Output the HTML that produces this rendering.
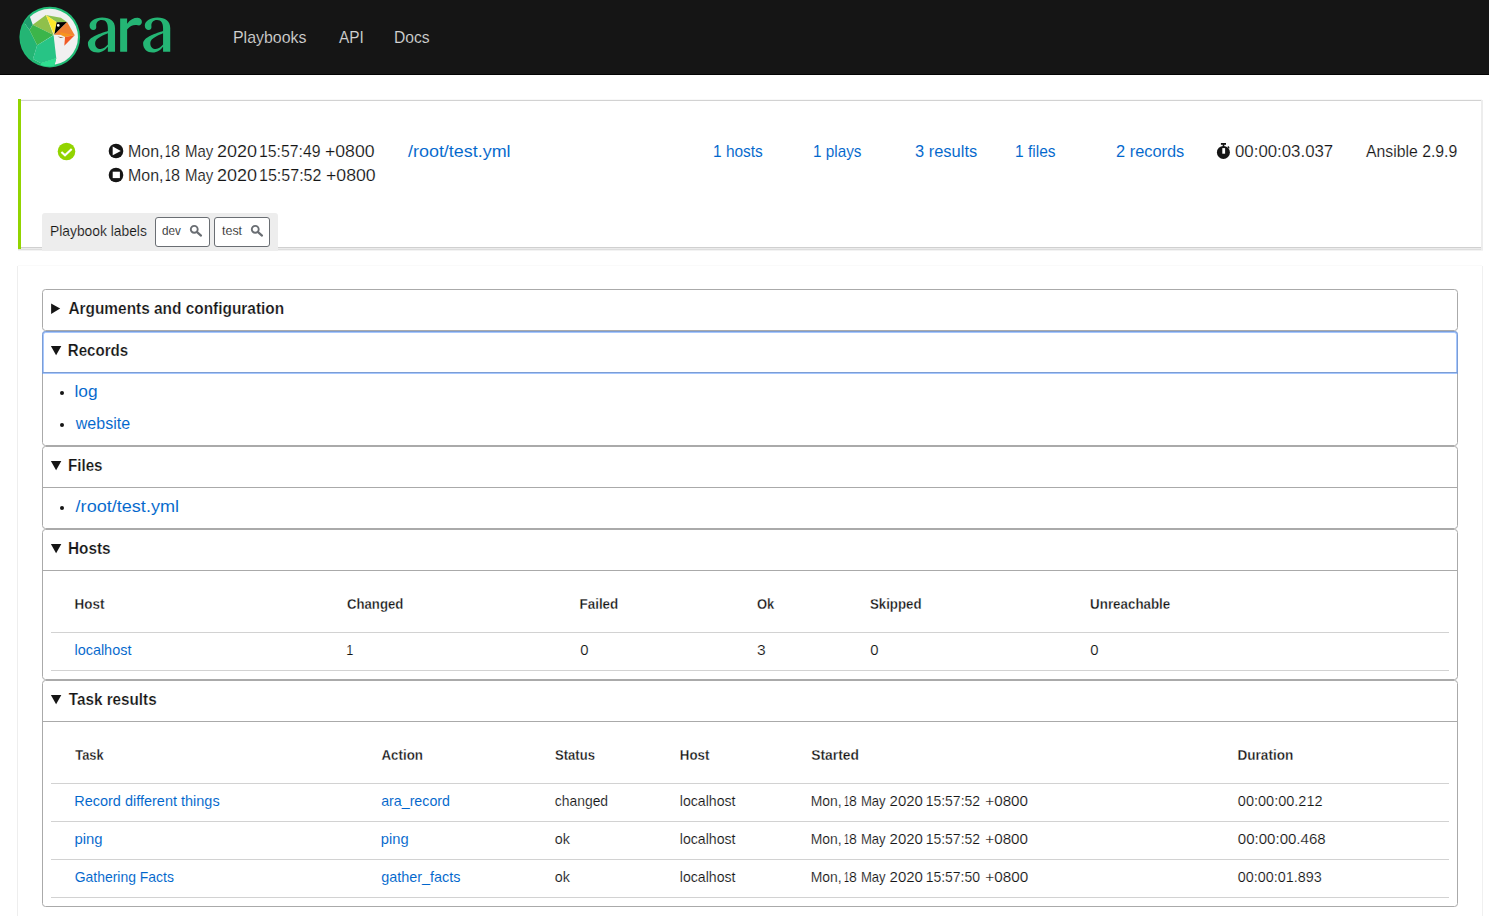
<!DOCTYPE html>
<html lang="en"><head><meta charset="utf-8"><title>ARA Records Ansible</title>
<style>
html,body{margin:0;padding:0}
body{width:1489px;height:916px;overflow:hidden;background:#fff;color:#151515;
 font-family:"Liberation Sans",sans-serif;font-size:16px;line-height:24px;position:relative}
a{color:#06c;text-decoration:none}
.t{display:inline-block;vertical-align:top;white-space:nowrap;transform-origin:0 50%}
.a{position:absolute;display:block;white-space:nowrap;transform-origin:0 50%;margin:0}
.a,td .t,li .t{-webkit-text-stroke:.15px #fff}
a.a,a .t{-webkit-text-stroke:.06px #fff}
summary .t{-webkit-text-stroke:.22px #fff}
th .t{-webkit-text-stroke:.3px #fff}
header a.a{-webkit-text-stroke:.12px #151515}
.a.lb{-webkit-text-stroke:.15px #ededed}
.ic{position:absolute;display:block;overflow:visible}
header{position:absolute;left:0;top:0;width:1489px;height:74px;background:#151515;border-bottom:1px solid #030303}
header .logo{position:absolute;left:15px;top:2px}
header .ara{position:absolute;left:82px;top:10px}
header nav a{color:#d2d2d2}
main{display:block}
.pb{position:absolute;left:0;top:0;width:1489px;height:260px}
.ln{position:absolute;display:block}
.labels{position:absolute;left:42px;top:213px;width:236px;height:38px;background:#ededed;border-radius:3px 3px 0 0}
.chip{position:absolute;top:4px;height:28px;color:#151515;border:1px solid #6a6e73;border-radius:3px;background:#fff}
.sec{position:absolute;left:0;top:0;width:1489px;height:916px}
.dl{position:absolute;left:42px;top:289px;width:1416px}
details{border:1px solid #aaa;border-radius:3.5px;padding:8px 8px 0;box-sizing:border-box;width:1416px;position:relative}
summary{font-weight:700;margin:-8px -8px 0;padding:8px;height:24px;list-style:none;display:block;position:relative;outline:none}
summary::-webkit-details-marker{display:none}
details[open]{padding:8px}
details[open]>summary{border-bottom:1px solid #aaa;margin-bottom:8px}
.tri{position:absolute;left:0;top:0}
summary .t{margin-left:0}
ul{margin:0;padding:0 0 0 24px;list-style:none}
li{height:24px;position:relative}
li+li{margin-top:8px}
li::before{content:"";position:absolute;left:-15.3px;top:9.6px;width:4.6px;height:4.6px;border-radius:50%;background:#151515}
table{border-collapse:collapse;table-layout:fixed;width:1398px;font-size:14px;line-height:21px}
th,td{text-align:left;padding:8px 0 8px 24px;border-bottom:1px solid #d2d2d2;font-weight:400;overflow:visible;white-space:nowrap}
th{padding-top:16px;padding-bottom:16px;font-weight:700}
.ring{position:absolute;left:-1px;top:-1px;width:1412px;height:39px;border:2px solid rgba(77,144,254,.5);border-radius:3.5px 3.5px 0 0;pointer-events:none}
</style></head><body>
<header>
<a href="#" class="brand"><svg class="logo" width="70" height="70" viewBox="0 0 916 916" aria-label="ara logo">
<defs><clipPath id="lc"><circle cx="455" cy="458.5" r="384"/></clipPath></defs>
<circle cx="455" cy="458.5" r="397" fill="#22bd77"/>
<circle cx="455" cy="458.5" r="369" fill="#f0f0f0"/>
<g clip-path="url(#lc)">
<polygon points="196,196 232,298 190,365 120,270 40,200 150,80" fill="#1f9e6e"/>
<polygon points="120,270 190,365 290,565 235,745 300,900 0,900 0,270" fill="#24b574"/>
<polygon points="232,298 405,170 505,432" fill="#8fc04b"/>
<polygon points="232,298 505,432 290,565 190,365" fill="#3cb54a"/>
<polygon points="405,170 600,205 680,262 545,265" fill="#8cc152"/>
<polygon points="405,170 545,265 512,430" fill="#fde92b"/>
<polygon points="545,265 682,262 514,428" fill="#000"/>
<circle cx="566" cy="306" r="17" fill="#fff"/>
<polygon points="682,262 782,436 514,428" fill="#f08232"/>
<polygon points="590,395 782,436 655,457 600,432" fill="#f7941e"/>
<polygon points="655,457 782,436 645,574" fill="#f15a24"/>
<polygon points="555,452 640,463 598,472" fill="#8b5e3c"/>
<polygon points="290,565 505,436 540,735 340,800 235,745" fill="#27c485"/>
<polygon points="235,745 340,800 540,735 515,830 500,900 260,900" fill="#24b574"/>
<polygon points="340,800 540,735 518,828 480,900 300,900 330,840" fill="#2edf90"/>
</g>
</svg><svg class="ara" width="100" height="50" viewBox="0 0 1489 744" aria-label="ara">
<g fill="#24b574" fill-rule="evenodd">
<path d="M492,622 L492,270 C492,170 420,113 300,113 C190,113 113,170 113,235 C113,275 138,298 170,298 C200,298 216,275 212,245 C205,190 240,150 295,150 C360,150 385,200 385,270 L385,312 C300,340 88,400 88,500 C88,585 150,634 230,634 C300,634 350,592 385,547 L385,622 Z M385,347 C330,372 195,420 195,490 C195,550 230,580 275,580 C320,580 360,545 385,515 Z"/>
<path d="M568,128 L672,128 L672,205 C715,140 780,113 832,116 C872,119 894,150 892,182 C889,218 860,235 830,227 C780,212 720,228 672,290 L672,622 L568,622 Z"/>
<path transform="translate(822,0)" d="M492,622 L492,270 C492,170 420,113 300,113 C190,113 113,170 113,235 C113,275 138,298 170,298 C200,298 216,275 212,245 C205,190 240,150 295,150 C360,150 385,200 385,270 L385,312 C300,340 88,400 88,500 C88,585 150,634 230,634 C300,634 350,592 385,547 L385,622 Z M385,347 C330,372 195,420 195,490 C195,550 230,580 275,580 C320,580 360,545 385,515 Z"/>
</g></svg></a>
<nav>
<a class="a" href="#" style="left:232.89px;top:26px;font-size:17px;line-height:24px;font-weight:400;transform:scaleX(0.9369)">Playbooks</a>
<a class="a" href="#" style="left:338.97px;top:26px;font-size:16px;line-height:24px;font-weight:400;transform:scaleX(0.9637)">API</a>
<a class="a" href="#" style="left:394.32px;top:26px;font-size:17px;line-height:24px;font-weight:400;transform:scaleX(0.9204)">Docs</a>
</nav></header>
<main>
<section class="pb"><i class="ln" style="left:21px;top:99px;width:1461px;height:1px;background:#f8f8f8"></i><i class="ln" style="left:21px;top:100px;width:1460px;height:1px;background:#d2d2d2"></i><i class="ln" style="left:1481px;top:100px;width:2px;height:150px;background:#ededed"></i><i class="ln" style="left:21px;top:247px;width:1460px;height:1px;background:#d0d0d0"></i><i class="ln" style="left:21px;top:248px;width:1460px;height:1px;background:#ebebeb"></i><i class="ln" style="left:18px;top:249px;width:1463px;height:1px;background:#dedede"></i><i class="ln" style="left:18px;top:250px;width:1465px;height:1px;background:#f3f3f3"></i><i class="ln" style="left:18px;top:99px;width:3px;height:150px;background:#92d400"></i>
<svg class="ic" style="left:57.1px;top:142.4px" width="19" height="19" viewBox="0 0 19 19"><circle cx="9.5" cy="9.5" r="8.8" fill="#92d400"/><path d="M4.4 9.9 L8 13.3 L14.7 6.9" fill="none" stroke="#fff" stroke-width="2.1"/></svg><svg class="ic" style="left:108px;top:143.25px" width="16" height="16" viewBox="0 0 16 16"><circle cx="8" cy="8" r="7.3" fill="#151515"/><path d="M4.7 3.5 L12.8 7.9 L4.7 12.3 Z" fill="#fff"/></svg><svg class="ic" style="left:108px;top:167.1px" width="16" height="16" viewBox="0 0 16 16"><circle cx="8" cy="8" r="7.3" fill="#151515"/><rect x="4.7" y="4.7" width="7.2" height="6.4" fill="#fff"/></svg>
<time><span class="a" style="left:127.74px;top:140px;font-size:17px;line-height:24px;font-weight:400;transform:scaleX(0.9392)">Mon, </span><span class="a" style="left:165.40px;top:140px;font-size:16px;line-height:24px;font-weight:400;transform:scaleX(0.6523)">1</span><span class="a" style="left:171.20px;top:140px;font-size:16px;line-height:24px;font-weight:400;transform:scaleX(1.0123)">8 </span><span class="a" style="left:184.57px;top:140px;font-size:17px;line-height:24px;font-weight:400;transform:scaleX(0.8831)">May </span><span class="a" style="left:217.20px;top:140px;font-size:16px;line-height:24px;font-weight:400;transform:scaleX(1.1240)">2020 </span><span class="a" style="left:259.10px;top:140px;font-size:16px;line-height:24px;font-weight:400;transform:scaleX(0.9867)">15:57:49 </span><span class="a" style="left:325.14px;top:140px;font-size:16px;line-height:24px;font-weight:400;transform:scaleX(1.1027)">+0800</span></time>
<time><span class="a" style="left:127.74px;top:164px;font-size:17px;line-height:24px;font-weight:400;transform:scaleX(0.9392)">Mon, </span><span class="a" style="left:165.40px;top:164px;font-size:16px;line-height:24px;font-weight:400;transform:scaleX(0.6523)">1</span><span class="a" style="left:171.20px;top:164px;font-size:16px;line-height:24px;font-weight:400;transform:scaleX(1.0123)">8 </span><span class="a" style="left:184.57px;top:164px;font-size:17px;line-height:24px;font-weight:400;transform:scaleX(0.8831)">May </span><span class="a" style="left:217.20px;top:164px;font-size:16px;line-height:24px;font-weight:400;transform:scaleX(1.1240)">2020 </span><span class="a" style="left:259.08px;top:164px;font-size:16px;line-height:24px;font-weight:400;transform:scaleX(1.0024)">15:57:52 </span><span class="a" style="left:325.94px;top:164px;font-size:16px;line-height:24px;font-weight:400;transform:scaleX(1.1038)">+0800</span></time>
<a class="a" href="#" style="left:408.40px;top:140px;font-size:17px;line-height:24px;font-weight:400;transform:scaleX(1.0544)">/root/test.yml</a>
<a class="a" href="#" style="left:713.02px;top:140px;font-size:17px;line-height:24px;font-weight:400;transform:scaleX(0.9092)">1 hosts</a>
<a class="a" href="#" style="left:813.23px;top:140px;font-size:17px;line-height:24px;font-weight:400;transform:scaleX(0.9008)">1 plays</a>
<a class="a" href="#" style="left:915.17px;top:140px;font-size:17px;line-height:24px;font-weight:400;transform:scaleX(0.9685)">3 results</a>
<a class="a" href="#" style="left:1014.62px;top:140px;font-size:17px;line-height:24px;font-weight:400;transform:scaleX(0.9129)">1 files</a>
<a class="a" href="#" style="left:1115.88px;top:140px;font-size:17px;line-height:24px;font-weight:400;transform:scaleX(0.9641)">2 records</a>
<svg class="ic" style="left:1216px;top:142px" width="16" height="18" viewBox="0 0 16 18"><circle cx="7.4" cy="10.4" r="6.5" fill="#151515"/><rect x="4.9" y="1" width="5.1" height="1.8" fill="#151515"/><rect x="6.7" y="2" width="1.6" height="3" fill="#151515"/><path d="M11.5 4.6 L12.9 4.2 L13.6 6.2 L12.4 6.6Z" fill="#151515"/><rect x="6.3" y="6.1" width="2.8" height="5.6" fill="#fff"/></svg>
<span class="a" style="left:1234.74px;top:140px;font-size:16px;line-height:24px;font-weight:400;transform:scaleX(1.0512)">00:00:03.037</span>
<span class="a" style="left:1365.67px;top:140px;font-size:17px;line-height:24px;font-weight:400;transform:scaleX(0.9287)">Ansible 2.9.9</span>
<div class="labels">
<span class="a lb" style="left:7.67px;top:7px;font-size:15px;line-height:21px;font-weight:400;transform:scaleX(0.9216)">Playbook labels</span>
<a href="#" class="chip" style="left:113px;width:53px"><span class="a" style="left:6.41px;top:3px;font-size:13px;line-height:20px;font-weight:400;transform:scaleX(0.8984)">dev</span><svg class="ic" style="left:33px;top:6px" width="15" height="14" viewBox="0 0 15 14"><circle cx="5.25" cy="5.3" r="3.45" fill="none" stroke="#6a6e73" stroke-width="1.9"/><path d="M7.8 7.9 L12 11.6" stroke="#6a6e73" stroke-width="2.2" stroke-linecap="round"/></svg></a>
<a href="#" class="chip" style="left:172px;width:54px"><span class="a" style="left:6.81px;top:3px;font-size:13px;line-height:20px;font-weight:400;transform:scaleX(0.9583)">test</span><svg class="ic" style="left:34.6px;top:6px" width="15" height="14" viewBox="0 0 15 14"><circle cx="5.25" cy="5.3" r="3.45" fill="none" stroke="#6a6e73" stroke-width="1.9"/><path d="M7.8 7.9 L12 11.6" stroke="#6a6e73" stroke-width="2.2" stroke-linecap="round"/></svg></a>
</div>
</section>
<section class="sec"><i class="ln" style="left:18px;top:265px;width:1464px;height:1px;background:#fafafa"></i><i class="ln" style="left:17px;top:266px;width:1px;height:650px;background:#eeeeee"></i><i class="ln" style="left:1482px;top:266px;width:1px;height:650px;background:#f0f0f0"></i></section>
<div class="dl">
<details><summary><svg class="tri" width="30" height="40" viewBox="0 0 30 40"><path d="M8.1 13.4 L17.2 18.6 L8.1 23.9 Z" fill="#151515"/></svg><span class="t" style="font-size:17px;transform:translate(17.42px,-1px) scaleX(0.9065)">Arguments and configuration</span></summary></details>
<details open><summary><svg class="tri" width="30" height="40" viewBox="0 0 30 40"><path d="M7.9 14 L18.3 14 L13.1 23.3 Z" fill="#151515"/></svg><span class="t" style="font-size:17px;transform:translate(16.79px,-1px) scaleX(0.8883)">Records</span><span class="ring"></span></summary>
<ul><li><a href="#"><span class="t" style="font-size:17px;transform:translate(-0.47px,-1px) scaleX(1.0174)">log</span></a></li>
<li><a href="#"><span class="t" style="font-size:17px;transform:translate(0.72px,-1px) scaleX(0.9436)">website</span></a></li></ul></details>
<details open><summary><svg class="tri" width="30" height="40" viewBox="0 0 30 40"><path d="M7.9 14 L18.3 14 L13.1 23.3 Z" fill="#151515"/></svg><span class="t" style="font-size:17px;transform:translate(16.99px,-1px) scaleX(0.8915)">Files</span></summary>
<ul><li><a href="#"><span class="t" style="font-size:17px;transform:translate(0.60px,-1px) scaleX(1.0628)">/root/test.yml</span></a></li></ul></details>
<details open><summary><svg class="tri" width="30" height="40" viewBox="0 0 30 40"><path d="M7.9 14 L18.3 14 L13.1 23.3 Z" fill="#151515"/></svg><span class="t" style="font-size:17px;transform:translate(16.97px,-1px) scaleX(0.9031)">Hosts</span></summary>
<table><colgroup><col style="width:272px"><col style="width:233px"><col style="width:177px"><col style="width:113px"><col style="width:220px"><col style="width:383px"></colgroup>
<thead><tr><th><span class="t" style="font-size:15px;transform:translate(-0.50px,-2px) scaleX(0.8959)">Host</span></th><th><span class="t" style="font-size:15px;transform:translate(-0.04px,-2px) scaleX(0.8791)">Changed</span></th><th><span class="t" style="font-size:15px;transform:translate(-0.50px,-2px) scaleX(0.8947)">Failed</span></th><th><span class="t" style="transform:translate(-0.03px,-1px) scaleX(0.9274)">Ok</span></th><th><span class="t" style="font-size:15px;transform:translate(-0.08px,-2px) scaleX(0.8854)">Skipped</span></th><th><span class="t" style="font-size:15px;transform:translate(0.10px,-2px) scaleX(0.8903)">Unreachable</span></th></tr></thead>
<tbody><tr><td><a href="#"><span class="t" style="font-size:15px;transform:translate(-0.57px,-2px) scaleX(0.9624)">localhost</span></a></td><td><span class="t" style="transform:translate(-0.67px,-1px) scaleX(0.9112)">1</span></td><td><span class="t" style="transform:translate(0.32px,-1px) scaleX(1.0609)">0</span></td><td><span class="t" style="transform:translate(0.01px,-1px) scaleX(1.1148)">3</span></td><td><span class="t" style="transform:translate(0.32px,-1px) scaleX(1.0609)">0</span></td><td><span class="t" style="transform:translate(0.32px,-1px) scaleX(1.0609)">0</span></td></tr></tbody></table></details>
<details open><summary><svg class="tri" width="30" height="40" viewBox="0 0 30 40"><path d="M7.9 14 L18.3 14 L13.1 23.3 Z" fill="#151515"/></svg><span class="t" style="font-size:17px;transform:translate(17.83px,-1px) scaleX(0.8963)">Task results</span></summary>
<table><colgroup><col style="width:306px"><col style="width:174px"><col style="width:125px"><col style="width:131px"><col style="width:427px"><col style="width:235px"></colgroup>
<thead><tr><th><span class="t" style="font-size:15px;transform:translate(0.26px,-2px) scaleX(0.8566)">Task</span></th><th><span class="t" style="font-size:15px;transform:translate(0.47px,-2px) scaleX(0.8885)">Action</span></th><th><span class="t" style="font-size:15px;transform:translate(0.02px,-2px) scaleX(0.8706)">Status</span></th><th><span class="t" style="font-size:15px;transform:translate(-0.19px,-2px) scaleX(0.8866)">Host</span></th><th><span class="t" style="font-size:15px;transform:translate(0.20px,-2px) scaleX(0.9232)">Started</span></th><th><span class="t" style="font-size:15px;transform:translate(-0.51px,-2px) scaleX(0.9041)">Duration</span></th></tr></thead><tbody>
<tr><td><a href="#"><span class="t" style="font-size:15px;transform:translate(-0.79px,-2px) scaleX(0.9653)">Record different things</span></a></td><td><a href="#"><span class="t" style="font-size:15px;transform:translate(0.20px,-2px) scaleX(0.9473)">ara_record</span></a></td><td><span class="t" style="font-size:15px;transform:translate(-0.19px,-2px) scaleX(0.9258)">changed</span></td><td><span class="t" style="font-size:15px;transform:translate(-0.25px,-2px) scaleX(0.9418)">localhost</span></td><td><time><span class="t" style="font-size:15px;transform:translate(-0.34px,-2px) scaleX(0.9263)">Mon, </span><span class="t" style="transform:translate(-0.04px,-1px) scaleX(0.6461)">1</span><span class="t" style="transform:translate(-3.04px,-1px) scaleX(1.0047)">8 </span><span class="t" style="font-size:15px;transform:translate(0.91px,-2px) scaleX(0.8716)">May </span><span class="t" style="transform:translate(1.59px,-1px) scaleX(1.0705)">2020 </span><span class="t" style="transform:translate(6.63px,-1px) scaleX(0.9995)">15:57:52 </span><span class="t" style="transform:translate(11.36px,-1px) scaleX(1.0843)">+0800</span></time></td><td><span class="t" style="transform:translate(-0.17px,-1px) scaleX(1.0361)">00:00:00.212</span></td></tr>
<tr><td><a href="#"><span class="t" style="font-size:15px;transform:translate(-0.56px,-2px) scaleX(0.9915)">ping</span></a></td><td><a href="#"><span class="t" style="font-size:15px;transform:translate(-0.15px,-2px) scaleX(0.9801)">ping</span></a></td><td><span class="t" style="font-size:15px;transform:translate(-0.20px,-2px) scaleX(0.9518)">ok</span></td><td><span class="t" style="font-size:15px;transform:translate(-0.25px,-2px) scaleX(0.9418)">localhost</span></td><td><time><span class="t" style="font-size:15px;transform:translate(-0.34px,-2px) scaleX(0.9263)">Mon, </span><span class="t" style="transform:translate(-0.04px,-1px) scaleX(0.6461)">1</span><span class="t" style="transform:translate(-3.04px,-1px) scaleX(1.0047)">8 </span><span class="t" style="font-size:15px;transform:translate(0.91px,-2px) scaleX(0.8716)">May </span><span class="t" style="transform:translate(1.59px,-1px) scaleX(1.0705)">2020 </span><span class="t" style="transform:translate(6.63px,-1px) scaleX(0.9995)">15:57:52 </span><span class="t" style="transform:translate(11.36px,-1px) scaleX(1.0843)">+0800</span></time></td><td><span class="t" style="transform:translate(-0.19px,-1px) scaleX(1.0746)">00:00:00.468</span></td></tr>
<tr><td><a href="#"><span class="t" style="font-size:15px;transform:translate(-0.30px,-2px) scaleX(0.9296)">Gathering Facts</span></a></td><td><a href="#"><span class="t" style="font-size:15px;transform:translate(0.19px,-2px) scaleX(0.9609)">gather_facts</span></a></td><td><span class="t" style="font-size:15px;transform:translate(-0.20px,-2px) scaleX(0.9518)">ok</span></td><td><span class="t" style="font-size:15px;transform:translate(-0.25px,-2px) scaleX(0.9418)">localhost</span></td><td><time><span class="t" style="font-size:15px;transform:translate(-0.34px,-2px) scaleX(0.9263)">Mon, </span><span class="t" style="transform:translate(-0.04px,-1px) scaleX(0.6461)">1</span><span class="t" style="transform:translate(-3.04px,-1px) scaleX(1.0047)">8 </span><span class="t" style="font-size:15px;transform:translate(0.91px,-2px) scaleX(0.8716)">May </span><span class="t" style="transform:translate(1.59px,-1px) scaleX(1.0705)">2020 </span><span class="t" style="transform:translate(6.63px,-1px) scaleX(0.9984)">15:57:50 </span><span class="t" style="transform:translate(11.36px,-1px) scaleX(1.0922)">+0800</span></time></td><td><span class="t" style="transform:translate(-0.16px,-1px) scaleX(1.0250)">00:00:01.893</span></td></tr>
</tbody></table></details>
</div>
</main>
</body></html>
